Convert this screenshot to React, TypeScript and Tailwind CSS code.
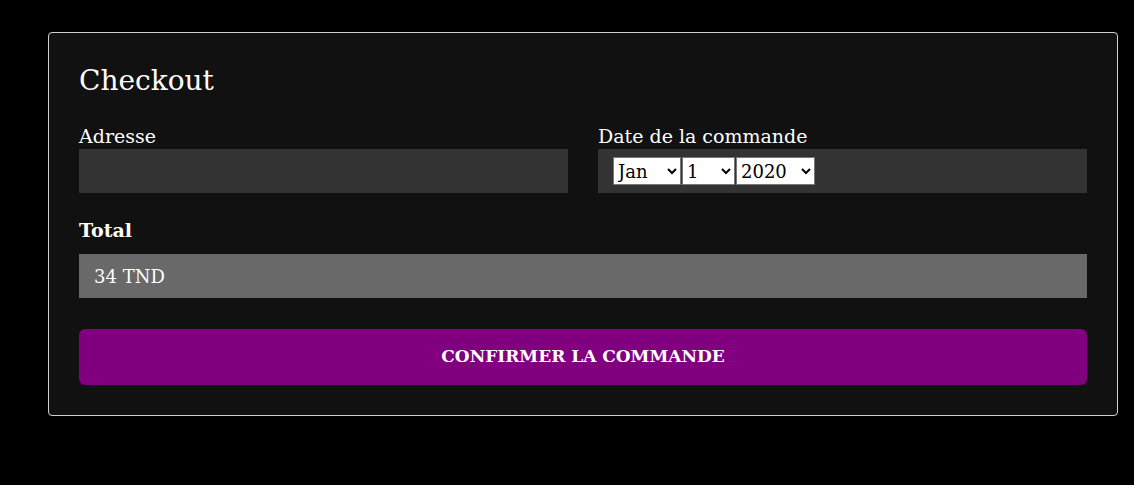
import React from "react"

const font = { fontFamily: '"DejaVu Serif", "Liberation Serif", serif' }

export default function App() {
  return (
    <div className="min-h-[485px] w-full bg-black pt-[32px] pl-[48px] pr-[16px]" style={font}>
      <div className="w-[1070px] rounded-[4px] border border-[#d0d0d0] bg-[#111111] px-[30px] pt-[30px] pb-[30px] text-white">
        <h1 className="text-[28px] leading-[36px]">Checkout</h1>

        <div className="mt-[25px] grid grid-cols-2 gap-[30px]">
          <div>
            <label className="block text-[19px] leading-[25px]">Adresse</label>
            <input className="block h-[44px] w-full bg-[#333333] px-[15px] text-[18px] text-white outline-none" />
          </div>
          <div>
            <label className="block text-[19px] leading-[25px]">Date de la commande</label>
            <div className="flex h-[44px] items-center bg-[#333333] px-[15px]">
              <select defaultValue="Jan" className="h-[28px] w-[68px] border border-[#767676] bg-white text-[18px] text-black" style={font}>
                <option>Jan</option>
                <option>Feb</option>
                <option>Mar</option>
              </select>
              <select defaultValue="1" className="ml-[1px] h-[28px] w-[53px] border border-[#767676] bg-white text-[18px] text-black" style={font}>
                <option>1</option>
                <option>2</option>
                <option>3</option>
              </select>
              <select defaultValue="2020" className="ml-[1px] h-[28px] w-[79px] border border-[#767676] bg-white text-[18px] text-black" style={font}>
                <option>2020</option>
                <option>2021</option>
              </select>
            </div>
          </div>
        </div>

        <label className="mt-[25px] block text-[19px] font-bold leading-[24px]">Total</label>
        <div className="mt-[12px] flex h-[44px] items-center bg-[#696969] px-[15px] text-[18px]">34 TND</div>

        <button className="mt-[31px] flex h-[56px] w-full items-center justify-center rounded-[6px] bg-[#800080] text-[17px] font-bold uppercase text-white" style={font}>
          Confirmer la commande
        </button>
      </div>
    </div>
  )
}
